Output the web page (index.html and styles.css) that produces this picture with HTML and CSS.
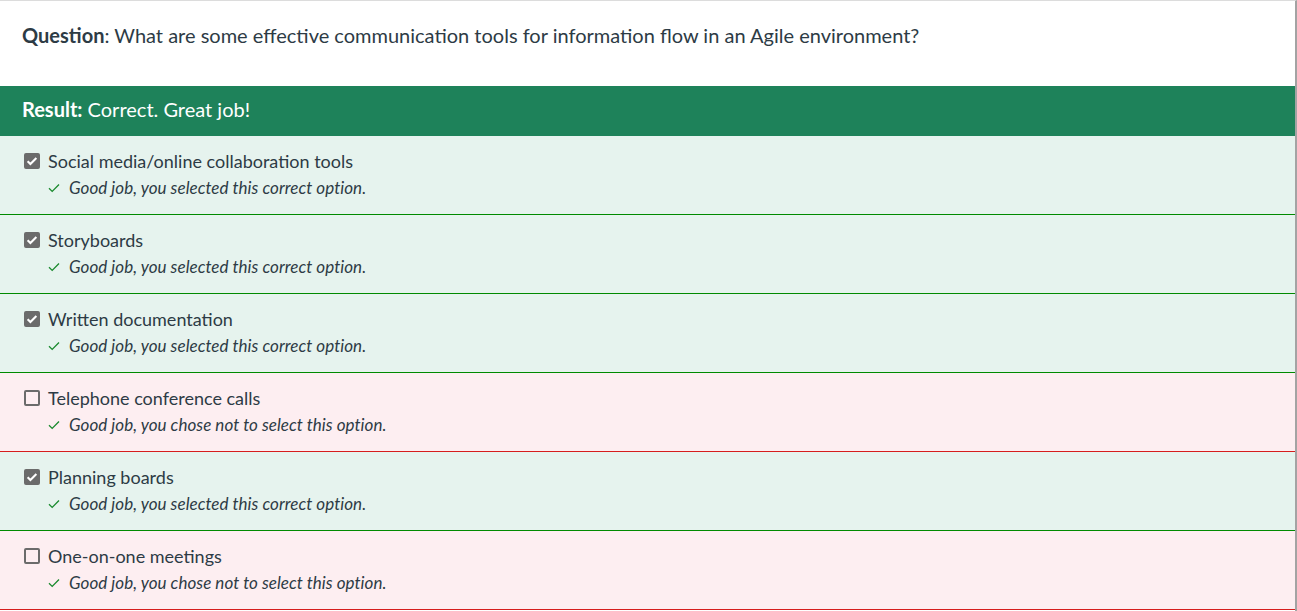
FILE: index.html
```html
<!DOCTYPE html>
<html>
<head>
<meta charset="utf-8">
<link rel="stylesheet" href="styles.css">
</head>
<body>
<div class="quiz">
  <div class="question"><strong>Question</strong>: What are some effective communication tools for information flow in an Agile environment?</div>
  <div class="result"><strong>Result:</strong> Correct. Great job!</div>
  <div class="options">
    <div class="option ok">
      <div class="label"><span class="box checked"><svg viewBox="0 0 16 16"><path d="M3 8.2l3.2 3.2L13 4.6" fill="none" stroke="#fff" stroke-width="2.4"/></svg></span>Social media/online collaboration tools</div>
      <div class="fb"><svg class="tick" viewBox="0 0 12 10"><path d="M1 5.2l3.2 3.2L11 1.5" fill="none" stroke="#1a8a2e" stroke-width="1.3"/></svg>Good job, you selected this correct option.</div>
    </div>
    <div class="option ok">
      <div class="label"><span class="box checked"><svg viewBox="0 0 16 16"><path d="M3 8.2l3.2 3.2L13 4.6" fill="none" stroke="#fff" stroke-width="2.4"/></svg></span>Storyboards</div>
      <div class="fb"><svg class="tick" viewBox="0 0 12 10"><path d="M1 5.2l3.2 3.2L11 1.5" fill="none" stroke="#1a8a2e" stroke-width="1.3"/></svg>Good job, you selected this correct option.</div>
    </div>
    <div class="option ok">
      <div class="label"><span class="box checked"><svg viewBox="0 0 16 16"><path d="M3 8.2l3.2 3.2L13 4.6" fill="none" stroke="#fff" stroke-width="2.4"/></svg></span>Written documentation</div>
      <div class="fb"><svg class="tick" viewBox="0 0 12 10"><path d="M1 5.2l3.2 3.2L11 1.5" fill="none" stroke="#1a8a2e" stroke-width="1.3"/></svg>Good job, you selected this correct option.</div>
    </div>
    <div class="option no">
      <div class="label"><span class="box"></span>Telephone conference calls</div>
      <div class="fb"><svg class="tick" viewBox="0 0 12 10"><path d="M1 5.2l3.2 3.2L11 1.5" fill="none" stroke="#1a8a2e" stroke-width="1.3"/></svg>Good job, you chose not to select this option.</div>
    </div>
    <div class="option ok">
      <div class="label"><span class="box checked"><svg viewBox="0 0 16 16"><path d="M3 8.2l3.2 3.2L13 4.6" fill="none" stroke="#fff" stroke-width="2.4"/></svg></span>Planning boards</div>
      <div class="fb"><svg class="tick" viewBox="0 0 12 10"><path d="M1 5.2l3.2 3.2L11 1.5" fill="none" stroke="#1a8a2e" stroke-width="1.3"/></svg>Good job, you selected this correct option.</div>
    </div>
    <div class="option no">
      <div class="label"><span class="box"></span>One-on-one meetings</div>
      <div class="fb"><svg class="tick" viewBox="0 0 12 10"><path d="M1 5.2l3.2 3.2L11 1.5" fill="none" stroke="#1a8a2e" stroke-width="1.3"/></svg>Good job, you chose not to select this option.</div>
    </div>
  </div>
</div>
</body>
</html>
```

FILE: styles.css
```css
html, body {
  margin: 0;
  padding: 0;
  background: #ffffff;
}
body {
  font-family: Lato, "Open Sans", sans-serif;
  color: #2d3b45;
}
.quiz {
  width: 1295px;
  border-top: 1px solid #dcdcdc;
  border-right: 2px solid #a3a3a3;
  min-height: 610px;
}
.question {
  height: 85px;
  box-sizing: border-box;
  padding: 22px 22px 0;
  font-size: 20px;
  line-height: 24px;
}
.question strong {
  font-weight: 700;
}
.result {
  height: 50px;
  box-sizing: border-box;
  padding: 11px 22px 0;
  background: #1e825a;
  color: #ffffff;
  font-size: 20px;
  line-height: 24px;
}
.result strong {
  font-weight: 700;
}
.option {
  height: 79px;
  box-sizing: border-box;
  padding: 14px 24px 0;
  display: flex;
  flex-direction: column;
  gap: 5px;
}
.option.ok {
  background: #e6f3ee;
  border-bottom: 1px solid #008a00;
}
.option.no {
  background: #fdeef1;
  border-bottom: 1px solid #d61d1d;
}
.label {
  display: flex;
  align-items: center;
  font-size: 18px;
  line-height: 22px;
  color: #2d3b45;
}
.box {
  width: 16px;
  height: 16px;
  box-sizing: border-box;
  border: 2px solid #6b6b6b;
  border-radius: 2px;
  margin-right: 8px;
  display: flex;
  align-items: center;
  justify-content: center;
  background: transparent;
}
.box.checked {
  background: #6b6b6b;
}
.box svg {
  width: 14px;
  height: 14px;
  flex: none;
}
.fb {
  display: flex;
  align-items: center;
  padding-left: 24px;
  font-size: 17px;
  line-height: 22px;
  font-style: italic;
  letter-spacing: 0.05px;
  color: #2d3b45;
}
.tick {
  width: 12px;
  height: 10px;
  margin-right: 9px;
  flex: none;
}
```
